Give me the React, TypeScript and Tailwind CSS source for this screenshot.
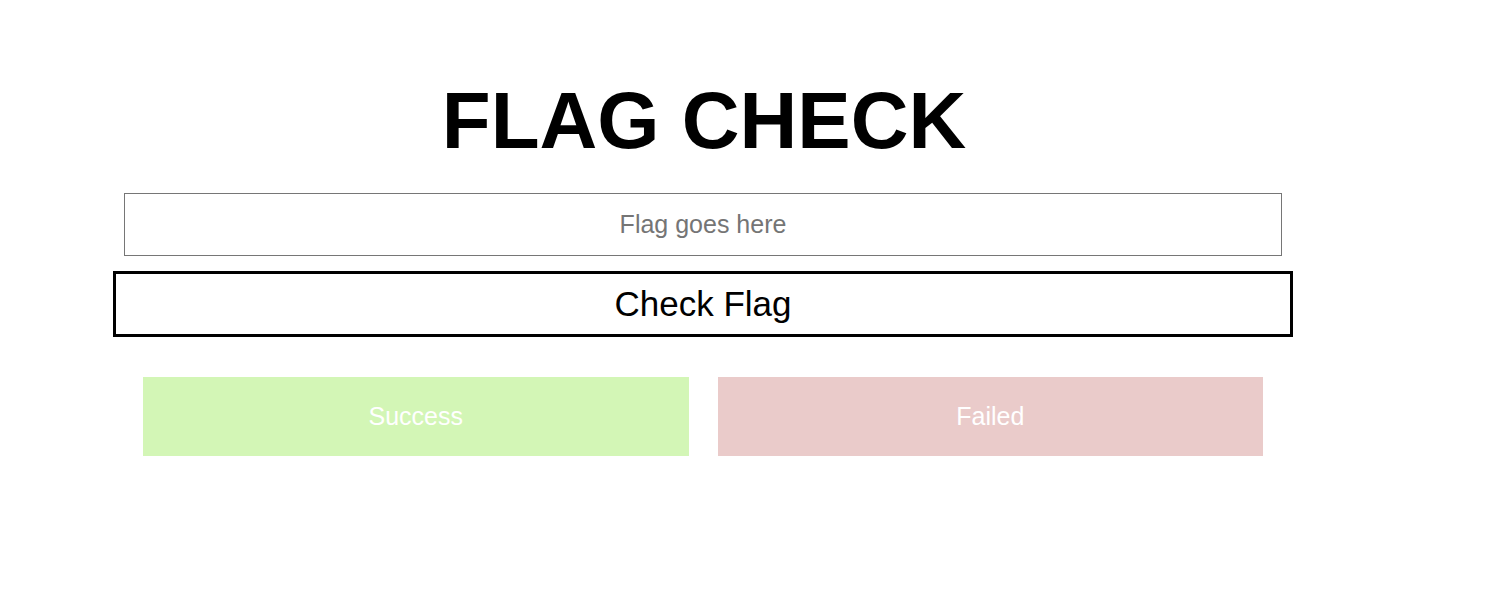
export default function App() {
    return (
        <div className="min-h-[601px] w-full bg-white font-['Liberation_Sans',Arial,sans-serif]">
            <div className="ml-[113px] flex w-[1180px] flex-col items-center pt-[81px]">
                <h1 className="pl-[2px] text-[80px] font-bold leading-[80px] text-black">FLAG CHECK</h1>

                <input
                    type="text"
                    placeholder="Flag goes here"
                    className="mt-[32px] h-[63px] w-[1158px] border border-[#767676] bg-white text-center text-[25px] text-black outline-none placeholder:text-[#757575]"
                />

                <button className="mt-[15px] h-[66px] w-full border-[3px] border-black bg-white text-[35px] text-black">
                    Check Flag
                </button>

                <div className="mt-[40px] flex w-[1120px] gap-[29px]">
                    <div className="flex h-[79px] flex-1 items-center justify-center bg-[#d3f6b6] text-[25px] text-white">
                        Success
                    </div>
                    <div className="flex h-[79px] flex-1 items-center justify-center bg-[#eacbca] text-[25px] text-white">
                        Failed
                    </div>
                </div>
            </div>
        </div>
    );
}
